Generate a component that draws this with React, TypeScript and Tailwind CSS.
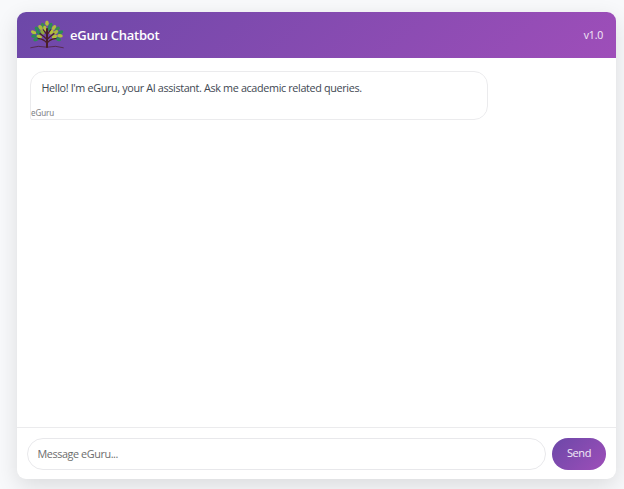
const leaves: [number, number, number, string][] = [
  [17, 3.2, 90, "#b4bf3c"], [13, 5.5, 60, "#3c8a50"], [20.5, 5.5, 120, "#2c8a57"],
  [10.5, 7.5, 50, "#a9b83d"], [15, 8.5, 75, "#b4bf3c"], [19.5, 8.5, 105, "#2c8a57"], [24, 7.5, 125, "#b4bf3c"],
  [7, 9, 45, "#2c8a57"], [27.5, 8.8, 140, "#3a8d50"], [3.6, 12.3, 25, "#b4bf3c"], [8.5, 12.5, 35, "#2c8a57"],
  [12.5, 12, 55, "#8faa3e"], [21.5, 12, 125, "#b4bf3c"], [25.7, 12.2, 145, "#a9b83d"], [30.6, 12.3, 155, "#2c8a57"],
  [4, 16, -5, "#2c8a57"], [9.3, 16.7, 20, "#b4bf3c"], [24.5, 16.8, 160, "#b4bf3c"], [30, 15.8, 5, "#b4bf3c"],
  [6, 19.4, -20, "#2c8a57"], [28.3, 19.2, 20, "#2c8a57"],
];

function TreeLogo() {
  return (
    <svg className="h-[30px] w-[34px] shrink-0" viewBox="0 0 34 30" fill="none" aria-hidden="true">
      {leaves.map(([x, y, angle, color], i) => (
        <ellipse key={i} cx={x} cy={y} rx="2.8" ry="1.8" fill={color} transform={`rotate(${angle} ${x} ${y})`} />
      ))}
      <g stroke="#4b2027" strokeLinecap="round">
        <path d="M17 27V9" strokeWidth="2" />
        <path d="M16.7 23C14 19 11 19 8 18.5M16.8 19.5C14 16 12 15 10 13.5M17 15L13.5 10M17.3 23C20 19 23 19 26 18.5M17.2 19.5C20 16 22 15 24 13.5M17 15L20.5 10" strokeWidth="1.2" />
        <path d="M.7 27.7Q8 25.2 17 27.2Q26 25.2 33.3 27.7" strokeWidth=".9" strokeOpacity=".75" />
      </g>
    </svg>
  );
}

export default function App() {
  return (
    <div className="h-[489px] w-[624px] overflow-hidden bg-[#f8f9fb] pl-[17px] pt-3 font-['Open_Sans','Noto_Sans',sans-serif]">
      <main className="flex h-[467px] w-[599px] flex-col overflow-hidden rounded-[9px] bg-white shadow-[0_7px_22px_rgba(0,0,0,0.12)]">
        <header className="flex h-[46px] shrink-0 items-center bg-[linear-gradient(135deg,#6c48a8,#9e4eb9)] pl-[13px] pr-[13px] text-white">
          <TreeLogo />
          <h1 className="ml-[6px] text-[13px] leading-[18px] font-semibold tracking-[-0.27px]">eGuru Chatbot</h1>
          <span className="ml-auto text-[10.5px] leading-4 tracking-[-0.2px] text-white/90">v1.0</span>
        </header>
        <section className="flex-1 pl-[13px] pt-[13px]">
          <div className="flex h-[49px] w-[458px] flex-col justify-between rounded-[14px] rounded-bl-[2px] border border-[#ebebed]">
            <p className="pl-[10.5px] pt-2 text-[10.8px] leading-4 tracking-[-0.35px] whitespace-nowrap text-[#414852]">Hello! I'm eGuru, your AI assistant. Ask me academic related queries.</p>
            <span className="font-['Noto_Sans',sans-serif] text-[8px] leading-[12px] tracking-[-0.1px] text-[#7b7e83]">eGuru</span>
          </div>
        </section>
        <footer className="flex h-[52px] shrink-0 items-center gap-[6px] border-t border-[#ebebed] px-[10px]">
          <input aria-label="Message" placeholder="Message eGuru..." className="h-8 w-[519px] rounded-full border border-[#e8e8eb] px-[9.5px] text-[10.8px] tracking-[-0.4px] outline-none placeholder:text-[#6d6d6d]" />
          <button className="h-8 w-[54px] rounded-full bg-[linear-gradient(135deg,#6c48a8,#9e4eb9)] text-[11px] tracking-[-0.4px] text-white/90">Send</button>
        </footer>
      </main>
    </div>
  );
}
